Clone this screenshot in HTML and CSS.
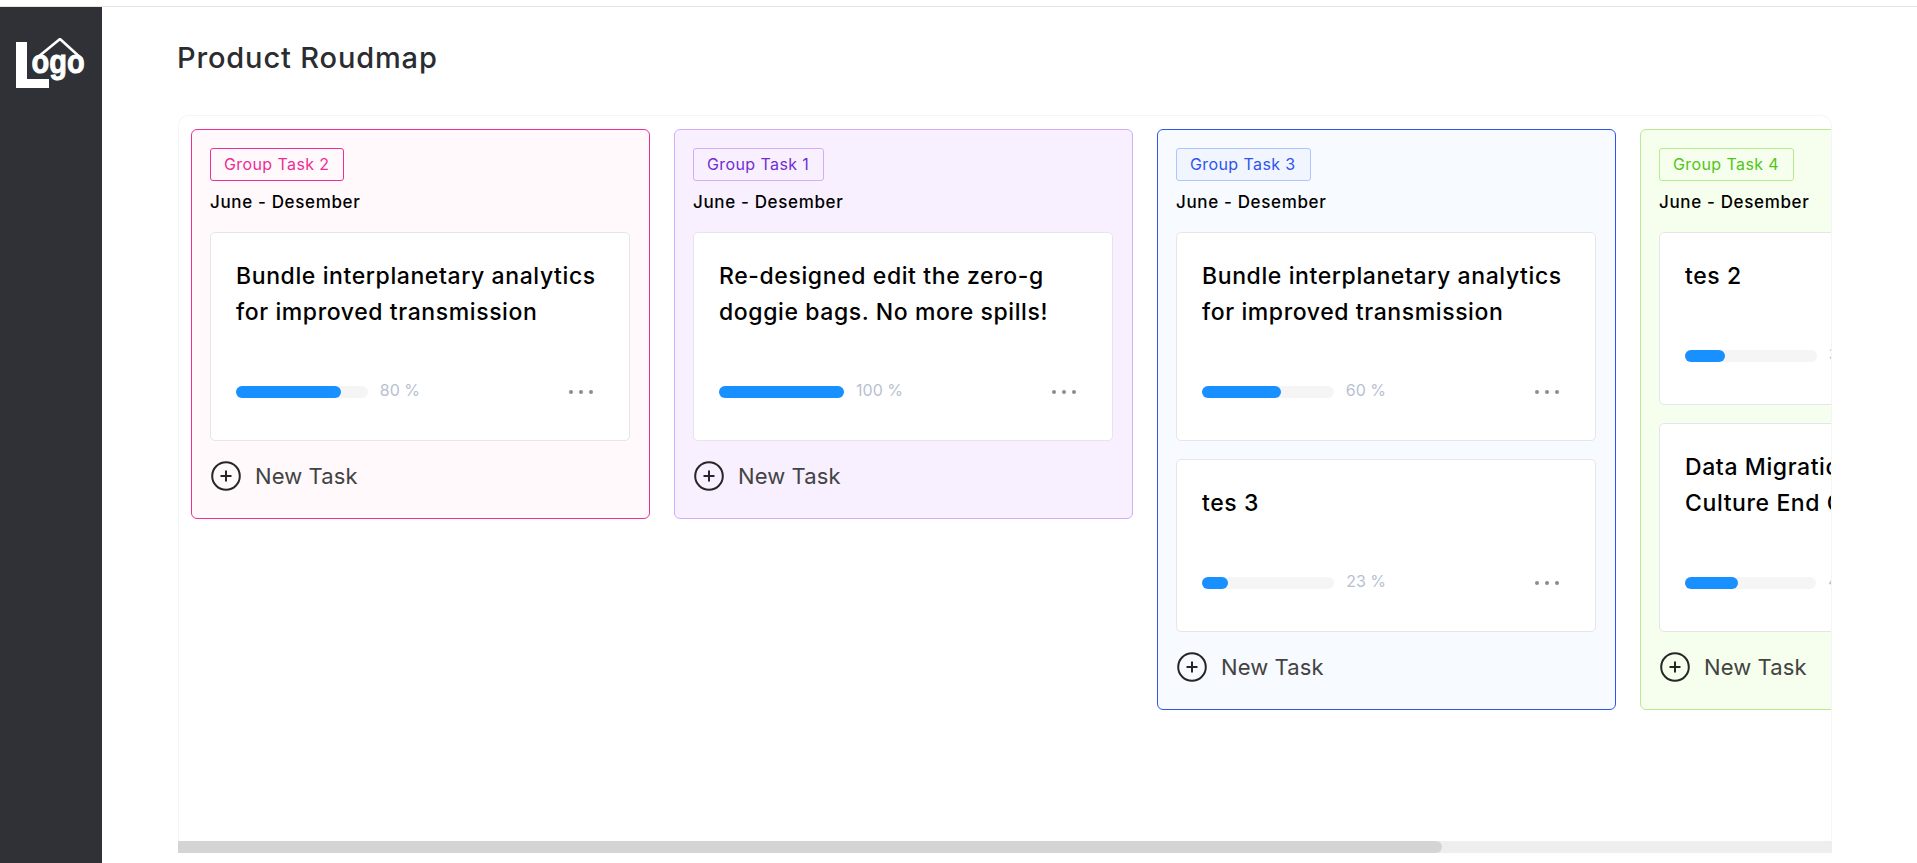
FILE: index.html
```html
<!DOCTYPE html>
<html lang="en">
<head>
    <meta charset="UTF-8">
    <meta name="viewport" content="width=device-width, initial-scale=1.0">
    <title>Product Roudmap</title>
    <link rel="stylesheet" href="styles.css">
</head>
<body>
    <div class="topline"></div>
    <div class="app">
        <aside class="sidebar">
            <svg class="logo" viewBox="0 0 72 52" width="72" height="52">
                <path d="M0 2h11v37h22v9H0z" fill="#fff" transform="translate(0 2)"/>
                <path d="M22 19L44 1l22 20" fill="none" stroke="#fff" stroke-width="2.6"/>
                <text class="logo-text" transform="translate(15.500 35) scale(1 1.12)">ogo</text>
            </svg>
        </aside>
        <main class="main">
            <h1 class="title">Product Roudmap</h1>
            <div class="board">
                <section class="column pink">
                    <span class="tag">Group Task 2</span>
                    <p class="date">June - Desember</p>
                    <div class="card">
                        <h3>Bundle interplanetary analytics for improved transmission</h3>
                        <div class="card-foot">
                            <div class="progress"><div class="bar"><div class="fill" style="width:80%"></div></div><span class="pct">80 %</span></div>
                            <svg class="dots" viewBox="0 0 26 6" width="26" height="6"><circle cx="3" cy="3" r="2"/><circle cx="13" cy="3" r="2"/><circle cx="23" cy="3" r="2"/></svg>
                        </div>
                    </div>
                    <div class="new-task">
                        <svg viewBox="0 0 30 30" width="30" height="30"><circle cx="15" cy="15" r="13.8"/><path d="M15 9.500v11M9.500 15h11"/></svg>
                        <span>New Task</span>
                    </div>
                </section>
                <section class="column purple">
                    <span class="tag">Group Task 1</span>
                    <p class="date">June - Desember</p>
                    <div class="card">
                        <h3>Re-designed edit the zero-g doggie bags. No more spills!</h3>
                        <div class="card-foot">
                            <div class="progress"><div class="bar"><div class="fill" style="width:100%"></div></div><span class="pct">100 %</span></div>
                            <svg class="dots" viewBox="0 0 26 6" width="26" height="6"><circle cx="3" cy="3" r="2"/><circle cx="13" cy="3" r="2"/><circle cx="23" cy="3" r="2"/></svg>
                        </div>
                    </div>
                    <div class="new-task">
                        <svg viewBox="0 0 30 30" width="30" height="30"><circle cx="15" cy="15" r="13.8"/><path d="M15 9.500v11M9.500 15h11"/></svg>
                        <span>New Task</span>
                    </div>
                </section>
                <section class="column blue">
                    <span class="tag">Group Task 3</span>
                    <p class="date">June - Desember</p>
                    <div class="card">
                        <h3>Bundle interplanetary analytics for improved transmission</h3>
                        <div class="card-foot">
                            <div class="progress"><div class="bar"><div class="fill" style="width:60%"></div></div><span class="pct">60 %</span></div>
                            <svg class="dots" viewBox="0 0 26 6" width="26" height="6"><circle cx="3" cy="3" r="2"/><circle cx="13" cy="3" r="2"/><circle cx="23" cy="3" r="2"/></svg>
                        </div>
                    </div>
                    <div class="card">
                        <h3>tes 3</h3>
                        <div class="card-foot">
                            <div class="progress"><div class="bar"><div class="fill" style="width:20%"></div></div><span class="pct">23 %</span></div>
                            <svg class="dots" viewBox="0 0 26 6" width="26" height="6"><circle cx="3" cy="3" r="2"/><circle cx="13" cy="3" r="2"/><circle cx="23" cy="3" r="2"/></svg>
                        </div>
                    </div>
                    <div class="new-task">
                        <svg viewBox="0 0 30 30" width="30" height="30"><circle cx="15" cy="15" r="13.8"/><path d="M15 9.500v11M9.500 15h11"/></svg>
                        <span>New Task</span>
                    </div>
                </section>
                <section class="column green">
                    <span class="tag">Group Task 4</span>
                    <p class="date">June - Desember</p>
                    <div class="card">
                        <h3>tes 2</h3>
                        <div class="card-foot">
                            <div class="progress"><div class="bar"><div class="fill" style="width:30%"></div></div><span class="pct">30 %</span></div>
                            <svg class="dots" viewBox="0 0 26 6" width="26" height="6"><circle cx="3" cy="3" r="2"/><circle cx="13" cy="3" r="2"/><circle cx="23" cy="3" r="2"/></svg>
                        </div>
                    </div>
                    <div class="card">
                        <h3>Data Migration Roadmap for Culture End Of Year</h3>
                        <div class="card-foot">
                            <div class="progress"><div class="bar"><div class="fill" style="width:40%"></div></div><span class="pct">40 %</span></div>
                            <svg class="dots" viewBox="0 0 26 6" width="26" height="6"><circle cx="3" cy="3" r="2"/><circle cx="13" cy="3" r="2"/><circle cx="23" cy="3" r="2"/></svg>
                        </div>
                    </div>
                    <div class="new-task">
                        <svg viewBox="0 0 30 30" width="30" height="30"><circle cx="15" cy="15" r="13.8"/><path d="M15 9.500v11M9.500 15h11"/></svg>
                        <span>New Task</span>
                    </div>
                </section>
            </div>
            <div class="scrollbar"><div class="thumb"></div></div>
        </main>
    </div>
</body>
</html>
```

FILE: styles.css
```css
* {
    box-sizing: border-box;
}
html, body {
    height: 100%;
}
body {
    margin: 0;
    overflow: hidden;
    background: #fff;
    font-family: Inter, "Noto Sans", sans-serif;
    color: #000;
}
.topline {
    height: 7px;
    border-bottom: 1px solid #e3e4e6;
}
.app {
    display: flex;
    height: 856px;
}
.sidebar {
    width: 102px;
    flex: none;
    background: #2f3136;
    padding: 31px 0 0 16px;
}
.logo {
    display: block;
}
.logo-text {
    font-family: "Liberation Sans", sans-serif;
    font-size: 29px;
    font-weight: 700;
    fill: #fff;
    stroke: #fff;
    stroke-width: 0.8px;
}
.main {
    flex: 1;
    min-width: 0;
    padding: 0 85px 10px 76px;
    display: flex;
    flex-direction: column;
}
.title {
    margin: 35px 0 0 -1px;
    height: 32px;
    line-height: 32px;
    font-size: 29px;
    letter-spacing: 0.85px;
    font-weight: 500;
    color: #2b2c30;
}
.board {
    margin-top: 41px;
    flex: 1;
    min-height: 0;
    display: flex;
    align-items: flex-start;
    gap: 24px;
    padding: 13px 12px 0;
    border: 1px solid #f5f5f5;
    border-bottom: 0;
    border-radius: 10px 10px 0 0;
    overflow: hidden;
}
.scrollbar {
    flex: none;
    height: 12px;
    background: #eee;
}
.thumb {
    width: 76.4%;
    height: 100%;
    background: #d4d4d4;
    border-radius: 0 6px 6px 0;
}
.column {
    flex: none;
    width: 459px;
    padding: 18px 19px 28px 18px;
    border: 1px solid;
    border-radius: 6px;
}
.tag {
    display: inline-block;
    height: 33px;
    line-height: 31px;
    padding: 0 14px 0 13px;
    border: 1px solid;
    border-radius: 3px;
    font-size: 16px;
    letter-spacing: 0.4px;
}
.date {
    margin: 9px 0 18px;
    height: 24px;
    line-height: 24px;
    font-size: 17px;
    letter-spacing: 0.65px;
    font-weight: 500;
}
.pink {
    background: #fff9fb;
    border-color: #eb2f96;
}
.pink .tag {
    color: #eb2f96;
    border-color: #eb2f96;
}
.purple {
    background: #f8f0ff;
    border-color: #d3adf7;
}
.purple .tag {
    color: #722ed1;
    border-color: #d3adf7;
}
.blue {
    background: #f7faff;
    border-color: #2f54eb;
}
.blue .tag {
    color: #2f54eb;
    border-color: #adc6ff;
    background: #f0f5ff;
}
.green {
    background: #f6ffed;
    border-color: #b7eb8f;
}
.green .tag {
    color: #52c41a;
    border-color: #b7eb8f;
}
.card {
    margin-bottom: 18px;
    padding: 25px 25px 36px;
    background: #fff;
    border: 1px solid #e6e6ea;
    border-radius: 5px;
}
.card h3 {
    margin: 0 0 50px;
    font-size: 23px;
    letter-spacing: 0.6px;
    line-height: 36px;
    font-weight: 500;
}
.card-foot {
    display: flex;
    align-items: center;
    justify-content: space-between;
    height: 24px;
}
.progress {
    width: 184px;
    display: flex;
    align-items: center;
    gap: 12px;
}
.bar {
    flex: 1;
    height: 12px;
    border-radius: 6px;
    background: #f5f5f5;
}
.fill {
    height: 100%;
    border-radius: 6px;
    background: #1890ff;
}
.pct {
    font-size: 16px;
    color: #b8bfd2;
    position: relative;
    top: -2px;
}
.dots {
    margin-right: 10px;
    fill: #8c8c8c;
}
.new-task {
    display: flex;
    align-items: center;
    gap: 14px;
    height: 29px;
    margin-top: 20px;
    margin-left: 1px;
    font-size: 22px;
    letter-spacing: 0.1px;
    color: #434343;
}
.new-task svg {
    fill: none;
    stroke: #262626;
    stroke-width: 2;
}
```
